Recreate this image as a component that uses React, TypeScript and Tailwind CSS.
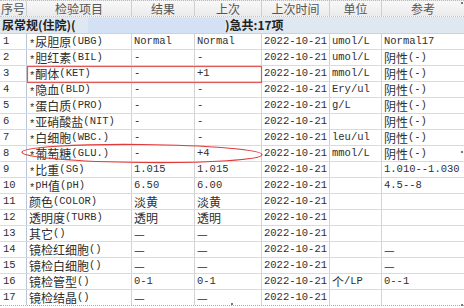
import React from "react";

const rows: string[][] = [
  ["1", "*尿胆原(UBG)", "Normal", "Normal", "2022-10-21", "umol/L", "Normal17"],
  ["2", "*胆红素(BIL)", "-", "-", "2022-10-21", "umol/L", "阴性(-)"],
  ["3", "*酮体(KET)", "-", "+1", "2022-10-21", "mmol/L", "阴性(-)"],
  ["4", "*隐血(BLD)", "-", "-", "2022-10-21", "Ery/ul", "阴性(-)"],
  ["5", "*蛋白质(PRO)", "-", "-", "2022-10-21", "g/L", "阴性(-)"],
  ["6", "*亚硝酸盐(NIT)", "-", "-", "2022-10-21", "", "阴性(-)"],
  ["7", "*白细胞(WBC.)", "-", "-", "2022-10-21", "leu/ul", "阴性(-)"],
  ["8", "*葡萄糖(GLU.)", "-", "+4", "2022-10-21", "mmol/L", "阴性(-)"],
  ["9", "*比重(SG)", "1.015", "1.015", "2022-10-21", "", "1.010--1.030"],
  ["10", "*pH值(pH)", "6.50", "6.00", "2022-10-21", "", "4.5--8"],
  ["11", "颜色(COLOR)", "淡黄", "淡黄", "2022-10-21", "", ""],
  ["12", "透明度(TURB)", "透明", "透明", "2022-10-21", "", ""],
  ["13", "其它()", "—", "—", "2022-10-21", "", ""],
  ["14", "镜检红细胞()", "—", "—", "2022-10-21", "", "—"],
  ["15", "镜检白细胞()", "—", "—", "2022-10-21", "", "—"],
  ["16", "镜检管型()", "0-1", "0-1", "2022-10-21", "个/LP", "0--1"],
  ["17", "镜检结晶()", "—", "—", "2022-10-21", "", ""],
];

const headers = ["序号", "检验项目", "结果", "上次", "上次时间", "单位", "参考"];

const grid = "grid grid-cols-[27px_105px_63px_67px_68px_52px_82px]";

const cjk = /[\u2014\u3000-\u9fff\uff00-\uffef]/;

// split text so latin glyphs use the narrow mono face and CJK the wide one
const Txt = ({ s }: { s: string }) => {
  const parts = s.split(/([\u2014\u3000-\u9fff\uff00-\uffef]+|\*)/).filter(Boolean);
  return (
    <>
      {parts.map((p, i) =>
        p === "*" ? (
          <span key={i} className="translate-y-[3px] text-[10.5px] [font-family:'Liberation_Mono',monospace]">
            *
          </span>
        ) : cjk.test(p) ? (
          <span key={i} className="text-[12px] [font-family:'Noto_Sans_CJK_SC',sans-serif]">
            {p}
          </span>
        ) : (
          <span key={i} className="text-[10.5px] [font-family:'Liberation_Mono','Noto_Sans_CJK_SC',monospace]">
            {p}
          </span>
        )
      )}
    </>
  );
};

export default function App() {
  return (
    <div className="relative w-[464px] h-[308px] overflow-hidden bg-white text-[#2f2f2f]">
      <div className={`${grid} h-[17px] border-t border-dotted border-[#bbb] bg-gradient-to-b from-[#f8f8f8] to-[#ebebeb] border-b border-b-[#c4c4c4]`}>
        {headers.map((h, i) => (
          <div
            key={h}
            className={`flex items-center justify-center overflow-hidden whitespace-nowrap text-[12px] leading-none text-[#555] [font-family:'Noto_Sans_CJK_SC',sans-serif] ${
              i < 6 ? "border-r border-[#cfcfcf]" : ""
            }`}
          >
            {h}
          </div>
        ))}
      </div>

      <div className="flex h-[17px] items-center bg-[#dfe7f1] border-b border-[#c9d3e0] leading-none">
        <div className="w-[88px] pl-[2px] font-bold text-[12px] text-[#222] whitespace-nowrap [font-family:'Noto_Sans_CJK_SC',sans-serif]">
          尿常规(住院)(
        </div>
        <div className="h-[15px] w-[137px] bg-[#d4e1f4]" />
        <div className="font-bold text-[12px] text-[#222] whitespace-nowrap [font-family:'Noto_Sans_CJK_SC',sans-serif]">
          )急共:17项
        </div>
      </div>

      {rows.map((r, ri) => (
        <div
          key={ri}
          className={`${grid} h-[16px] border-b ${
            ri === rows.length - 1 ? "border-dotted border-[#aaa]" : "border-[#dadada]"
          }`}
        >
          {r.map((c, ci) => (
            <div
              key={ci}
              className={`flex items-center overflow-hidden whitespace-nowrap leading-none ${
                ci === 0 ? "pl-[3px] border-r border-[#b9c6d6]" : "pl-[2px]"
              } ${ci > 0 && ci < 6 ? "border-r border-[#d2d2d2]" : ""}`}
            >
              <Txt s={c} />
            </div>
          ))}
        </div>
      ))}

      <svg className="pointer-events-none absolute left-0 top-0" width="464" height="308">
        <rect x="27.5" y="66.5" width="234" height="16" fill="none" stroke="#e2595a" strokeWidth="1.2" />
        <ellipse cx="142" cy="153.5" rx="120" ry="9" fill="none" stroke="#e03a3a" strokeWidth="1.2" transform="rotate(0.6 142 153.5)" />
      </svg>
      <div className="absolute right-[1px] top-[2px] h-[2px] w-[2px] bg-[#777]" />
      <div className="absolute right-[1px] top-[151px] h-[2px] w-[2px] bg-[#777]" />
      <div className="absolute right-[1px] bottom-[2px] h-[2px] w-[2px] bg-[#777]" />
      <div className="absolute left-[231px] bottom-[3px] h-[2px] w-[2px] bg-[#777]" />
    </div>
  );
}
